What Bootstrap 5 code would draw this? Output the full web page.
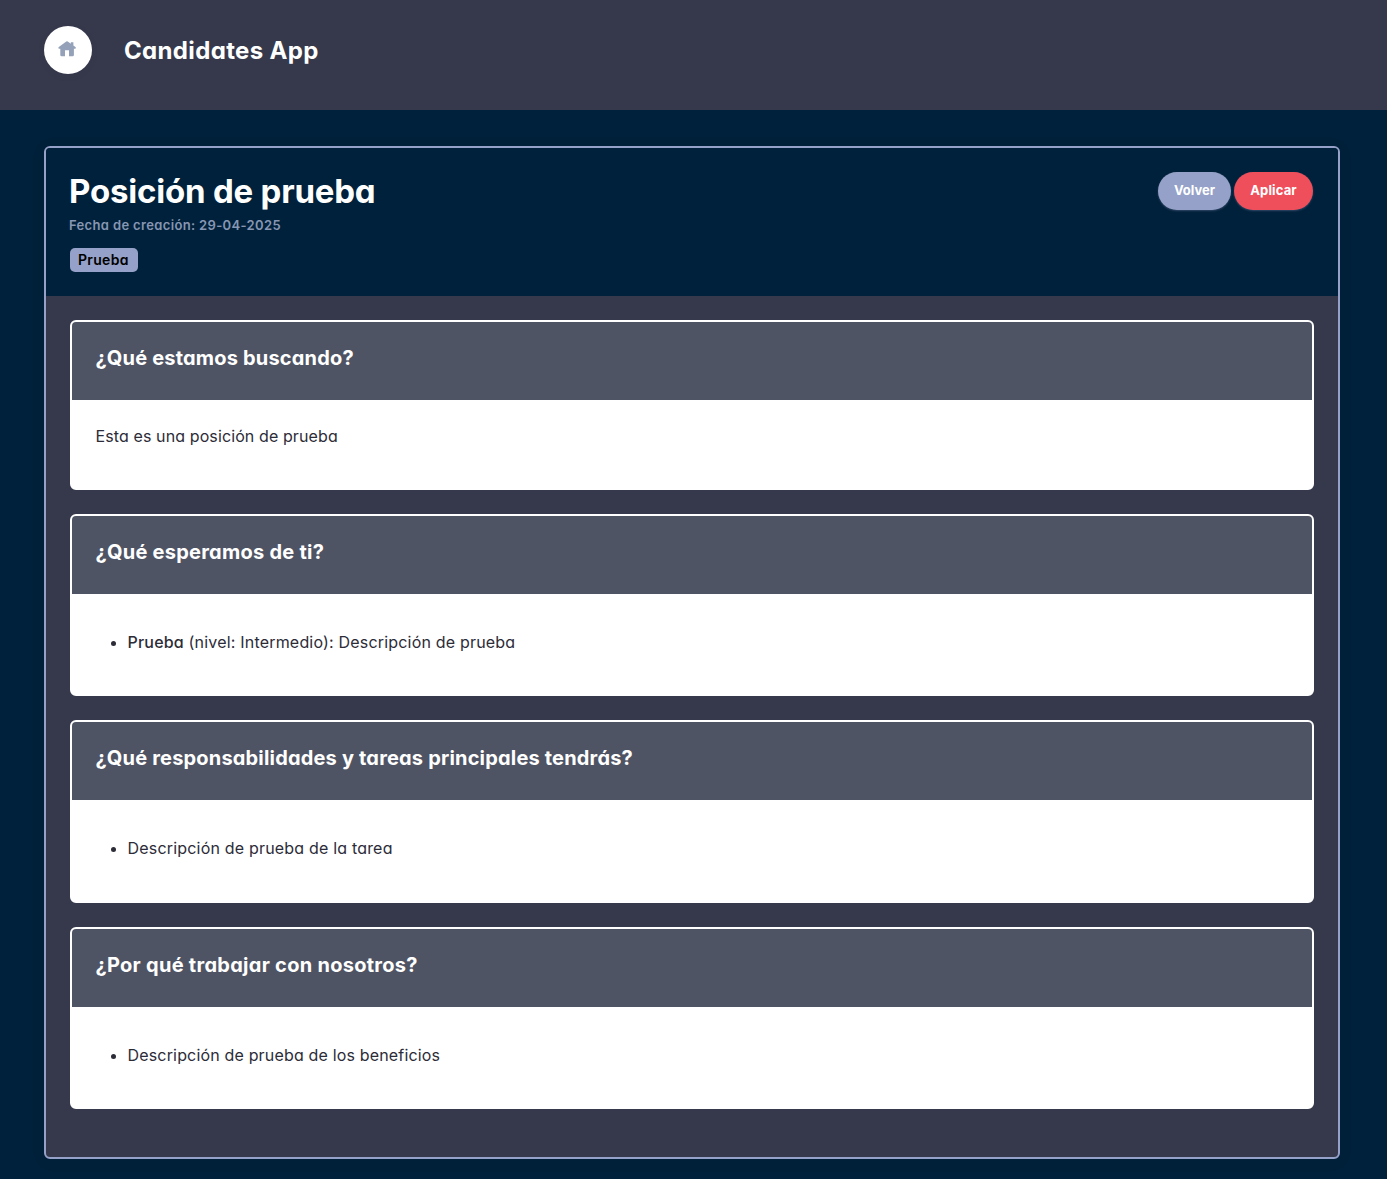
<!DOCTYPE html>
<html lang="es">
<head>
<meta charset="utf-8">
<meta name="viewport" content="width=device-width, initial-scale=1">
<title>Candidates App</title>
<link href="https://cdn.jsdelivr.net/npm/bootstrap@5.3.0/dist/css/bootstrap.min.css" rel="stylesheet">
<style>
body{background:#00213b;color:#2c2c38;font-family:Inter,"Liberation Sans",sans-serif;font-feature-settings:"cv11";min-height:1179px}
.app-bar{background:#36394c;height:110px;padding:26px 44px}
.home-btn{width:48px;height:48px;background:#fff;box-shadow:0 2px 10px rgba(0,0,0,.04);padding:0 2px 2px 0}
.app-title{font-size:24px;line-height:50px;font-weight:700}
.page-wrap{padding:36px 47px 20px 44px}
.position-card{border:2px solid #95a1c8;border-radius:6px;background:#36394c;height:1013px;box-shadow:0 2px 14px rgba(0,0,0,.08)}
.position-head{background:#00213b;height:148px;border-radius:4px 4px 0 0;padding:24px 25px 24px 23px}
.position-title{font-size:33px;line-height:38px;font-weight:700}
.date-line{font-size:13px;line-height:20px;font-weight:600;color:#8796b3;margin-top:5px}
.tag-label{background:#95a1c8;color:#000;font-size:14px;line-height:24px;font-weight:600;padding:0 8px;height:24px;border-radius:5px;margin:13px 0 0 1px;width:68px}
.pill-btn{height:38px;font-size:13px;font-weight:700;color:#fff;padding:0 0 2px;border:0;line-height:36px;box-shadow:0 1px 2px rgba(120,130,170,.4)}
.pill-btn .fit{line-height:34px}
.btn-volver{background:#95a1c8;width:73px}
.btn-aplicar{background:#ef4f5b;width:79px}
.info-card{border:2px solid #fff;border-radius:6px;background:#fff;height:182.4px}
.info-card.short-card{height:170px}
.info-head{background:#4f5464;color:#fff;height:78px;padding:0 23.500px;border-radius:4px 4px 0 0}
.info-title{font-size:20px;line-height:72px;font-weight:700}
.info-body{font-size:16px;line-height:24px;padding:24px 23.500px}
.info-list{padding-left:32px;margin:12px 0 0}
.info-list b{font-weight:500}
.fit{display:inline-block;white-space:nowrap}
.f-app{letter-spacing:.35px}
.f-main{letter-spacing:-.2px}
.f-date{letter-spacing:.35px}
.f-tag{letter-spacing:.3px}
.f-aplicar{letter-spacing:.15px}
.f-h1{letter-spacing:.18px}
.f-h2{letter-spacing:.25px}
.f-h3{letter-spacing:.18px}
.f-h4{letter-spacing:.28px}
.f-b1{letter-spacing:.11px}
.f-b2{letter-spacing:.19px}
.f-b3{letter-spacing:.19px}
.f-b4{letter-spacing:.17px}
</style>
</head>
<body>
<header class="app-bar d-flex align-items-start">
  <a href="#" class="home-btn rounded-circle d-flex align-items-center justify-content-center" aria-label="Inicio">
    <svg width="18" height="16" viewBox="0 0 18 16" fill="#95a1b9"><path d="M8.300.500Q9 0 9.700.500L12.800 2.700V1.200h2.600v3.400l2 1.500c.9.800.5 1.700-.5 1.700h-1V14q0 1.300-1.300 1.300H11V9.300H7v6H3.600Q2.300 15.300 2.300 14V7.800h-1C.3 7.800 0 6.800.8 6.100Z"/></svg>
  </a>
  <span class="app-title text-white ms-4 ps-2"><span class="fit f-app">Candidates App</span></span>
</header>
<main class="page-wrap">
  <section class="position-card">
    <div class="position-head d-flex justify-content-between align-items-start">
      <div>
        <h1 class="position-title text-white m-0"><span class="fit f-main">Posición de prueba</span></h1>
        <div class="date-line"><span class="fit f-date">Fecha de creación: 29-04-2025</span></div>
        <div class="tag-label"><span class="fit f-tag">Prueba</span></div>
      </div>
      <div class="d-flex" style="gap:3px">
        <button class="btn rounded-pill pill-btn btn-volver"><span class="fit f-volver">Volver</span></button>
        <button class="btn rounded-pill pill-btn btn-aplicar"><span class="fit f-aplicar">Aplicar</span></button>
      </div>
    </div>
    <div class="d-flex flex-column gap-4 p-4">
      <article class="info-card short-card">
        <div class="info-head"><h2 class="info-title m-0"><span class="fit f-h1">¿Qué estamos buscando?</span></h2></div>
        <div class="info-body"><p class="m-0"><span class="fit f-b1">Esta es una posición de prueba</span></p></div>
      </article>
      <article class="info-card">
        <div class="info-head"><h2 class="info-title m-0"><span class="fit f-h2">¿Qué esperamos de ti?</span></h2></div>
        <div class="info-body"><ul class="info-list"><li><span class="fit f-b2"><b>Prueba</b> (nivel: Intermedio): Descripción de prueba</span></li></ul></div>
      </article>
      <article class="info-card">
        <div class="info-head"><h2 class="info-title m-0"><span class="fit f-h3">¿Qué responsabilidades y tareas principales tendrás?</span></h2></div>
        <div class="info-body"><ul class="info-list"><li><span class="fit f-b3">Descripción de prueba de la tarea</span></li></ul></div>
      </article>
      <article class="info-card">
        <div class="info-head"><h2 class="info-title m-0"><span class="fit f-h4">¿Por qué trabajar con nosotros?</span></h2></div>
        <div class="info-body"><ul class="info-list"><li><span class="fit f-b4">Descripción de prueba de los beneficios</span></li></ul></div>
      </article>
    </div>
  </section>
</main>
<script src="https://cdn.jsdelivr.net/npm/bootstrap@5.3.0/dist/js/bootstrap.bundle.min.js"></script>
</body>
</html>
